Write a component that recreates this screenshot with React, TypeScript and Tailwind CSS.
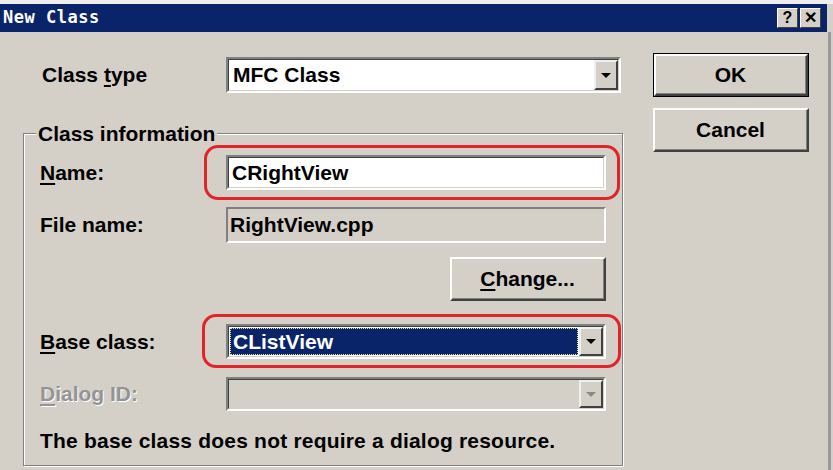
import React from 'react';

const FONT = "font-['Liberation_Sans',Arial,sans-serif]";

// Sunken 3D edit/combo frame
const Sunken = ({ className = '', children }: { className?: string; children?: React.ReactNode }) => (
  <div className={`border-2 border-t-[#808080] border-l-[#808080] border-b-white border-r-white ${className}`}>
    <div className="h-full w-full border-t border-l border-t-[#404040] border-l-[#404040] border-b border-r border-b-[#d4d0c8] border-r-[#d4d0c8]">
      {children}
    </div>
  </div>
);

const Arrow = ({ color }: { color: string }) => (
  <svg width="12" height="7" viewBox="0 0 12 7">
    <polygon points="1,1 11,1 6,6" fill={color} />
  </svg>
);

const DropButton = ({ disabled }: { disabled?: boolean }) => (
  <div className="h-full w-[24px] border-t-2 border-l-2 border-t-[#f0f0f0] border-l-[#f0f0f0] border-b-2 border-r-2 border-b-[#404040] border-r-[#404040] bg-[#d4d0c8] flex items-center justify-center">
    <Arrow color={disabled ? '#8a8a8a' : '#000'} />
  </div>
);

const Button = ({ children, isDefault }: { children: React.ReactNode; isDefault?: boolean }) => (
  <div className={`w-[156px] h-[44px] ${isDefault ? 'border border-black' : ''}`}>
    <div className="h-full w-full border-t-2 border-l-2 border-t-white border-l-white border-b-2 border-r-2 border-b-[#404040] border-r-[#404040]">
      <div className="h-full w-full border-b border-r border-b-[#808080] border-r-[#808080] flex items-center justify-center text-[21px] font-bold text-black">
        {children}
      </div>
    </div>
  </div>
);

const RedMark = ({ className }: { className: string }) => (
  <div className={`absolute border-[3px] border-[#e0242a] rounded-[14px] pointer-events-none ${className}`} />
);

const TitleBox = ({ children }: { children: React.ReactNode }) => (
  <div className="w-[21px] h-[20px] bg-[#d4d0c8] border-t border-l border-t-white border-l-white border-b border-r border-b-[#404040] border-r-[#404040] flex items-center justify-center text-[16px] font-bold leading-none text-black">
    {children}
  </div>
);

export default function App() {
  return (
    <div className={`w-[833px] h-[470px] overflow-hidden bg-[#d4d0c8] ${FONT} text-black flex flex-col`}>
      {/* window top edge */}
      <div className="h-[4px] bg-[#eeeeee] shrink-0" />

      {/* title bar */}
      <div className="h-[28px] mr-[6px] bg-[#0a246a] flex items-center pl-[3px] pr-[6px] shrink-0">
        <span className="font-['DejaVu_Sans_Mono',monospace] font-bold text-[17px] text-white tracking-[0.5px]">New Class</span>
        <div className="ml-auto flex gap-[2px]">
          <TitleBox>?</TitleBox>
          <TitleBox>✕</TitleBox>
        </div>
      </div>

      {/* body */}
      <div className="flex flex-1 border-r-[3px] border-r-[#9a9a9a] mr-[2px]">
        {/* left column */}
        <div className="w-[623px] pl-[23px] flex flex-col">
          <div className="flex items-center mt-[25px] pl-[19px] h-[36px]">
            <div className="w-[184px] text-[21px] font-bold">
              Class <span className="underline underline-offset-[3px]">t</span>ype
            </div>
            <Sunken className="w-[395px] h-[36px] bg-white">
              <div className="flex h-full bg-white">
                <div className="flex-1 flex items-center pl-[4px] text-[21px] font-bold">MFC Class</div>
                <DropButton />
              </div>
            </Sunken>
          </div>

          {/* group box */}
          <div className="relative mt-[40px] h-[333px] border border-[#808080] shadow-[inset_1px_1px_0_#ffffff,1px_1px_0_#ffffff] pt-[21px]">
            <div className="absolute -top-[12px] left-[12px] px-[2px] bg-[#d4d0c8] text-[21px] font-bold leading-[24px]">
              Class information
            </div>

            {/* Name */}
            <div className="flex items-center pl-[16px]">
              <div className="w-[186px] text-[21px] font-bold">
                <span className="underline underline-offset-[3px]">N</span>ame:
              </div>
              <div className="relative">
                <Sunken className="w-[380px] h-[35px] bg-white">
                  <div className="h-full flex items-center pl-[3px] text-[21px] font-bold bg-white">CRightView</div>
                </Sunken>
                <RedMark className="-left-[22px] -top-[10px] -right-[14px] -bottom-[10px]" />
              </div>
            </div>

            {/* File name */}
            <div className="flex items-center pl-[16px] mt-[17px]">
              <div className="w-[186px] text-[21px] font-bold">File name:</div>
              <div className="w-[380px] h-[36px] border-t-2 border-l-2 border-t-[#808080] border-l-[#808080] border-b-2 border-r-2 border-b-white border-r-white flex items-center pl-[2px] text-[21px] font-bold">
                RightView.cpp
              </div>
            </div>

            {/* Change button */}
            <div className="flex justify-end w-[582px] mt-[14px]">
              <Button>
                <span>
                  <span className="underline underline-offset-[3px]">C</span>hange...
                </span>
              </Button>
            </div>

            {/* Base class */}
            <div className="flex items-center pl-[16px] mt-[23px]">
              <div className="w-[186px] text-[21px] font-bold">
                <span className="underline underline-offset-[3px]">B</span>ase class:
              </div>
              <div className="relative">
                <Sunken className="w-[380px] h-[35px] bg-white">
                  <div className="flex h-full bg-white">
                    <div className="flex-1 p-[1px] bg-white">
                      <div className="h-full bg-[#0a246a] border border-dotted border-[#e8e0a0] flex items-center pl-[2px] text-[21px] font-bold text-white">
                        CListView
                      </div>
                    </div>
                    <DropButton />
                  </div>
                </Sunken>
                <RedMark className="-left-[24px] -top-[10px] -right-[15px] -bottom-[9px]" />
              </div>
            </div>

            {/* Dialog ID */}
            <div className="flex items-center pl-[16px] mt-[18px]">
              <div className="w-[186px] text-[21px] font-bold text-[#949494] [text-shadow:1px_1px_0_#ffffff]">
                <span className="underline underline-offset-[3px]">D</span>ialog ID:
              </div>
              <Sunken className="w-[380px] h-[34px]">
                <div className="flex h-full justify-end bg-[#d4d0c8]">
                  <DropButton disabled />
                </div>
              </Sunken>
            </div>

            <div className="pl-[16px] mt-[18px] text-[21px] font-bold leading-[24px] tracking-[0.2px]">
              The base class does not require a dialog resource.
            </div>
          </div>
        </div>

        {/* right column */}
        <div className="ml-[30px] pt-[21px] flex flex-col gap-[11px]">
          <Button isDefault>OK</Button>
          <Button>Cancel</Button>
        </div>
      </div>
    </div>
  );
}
